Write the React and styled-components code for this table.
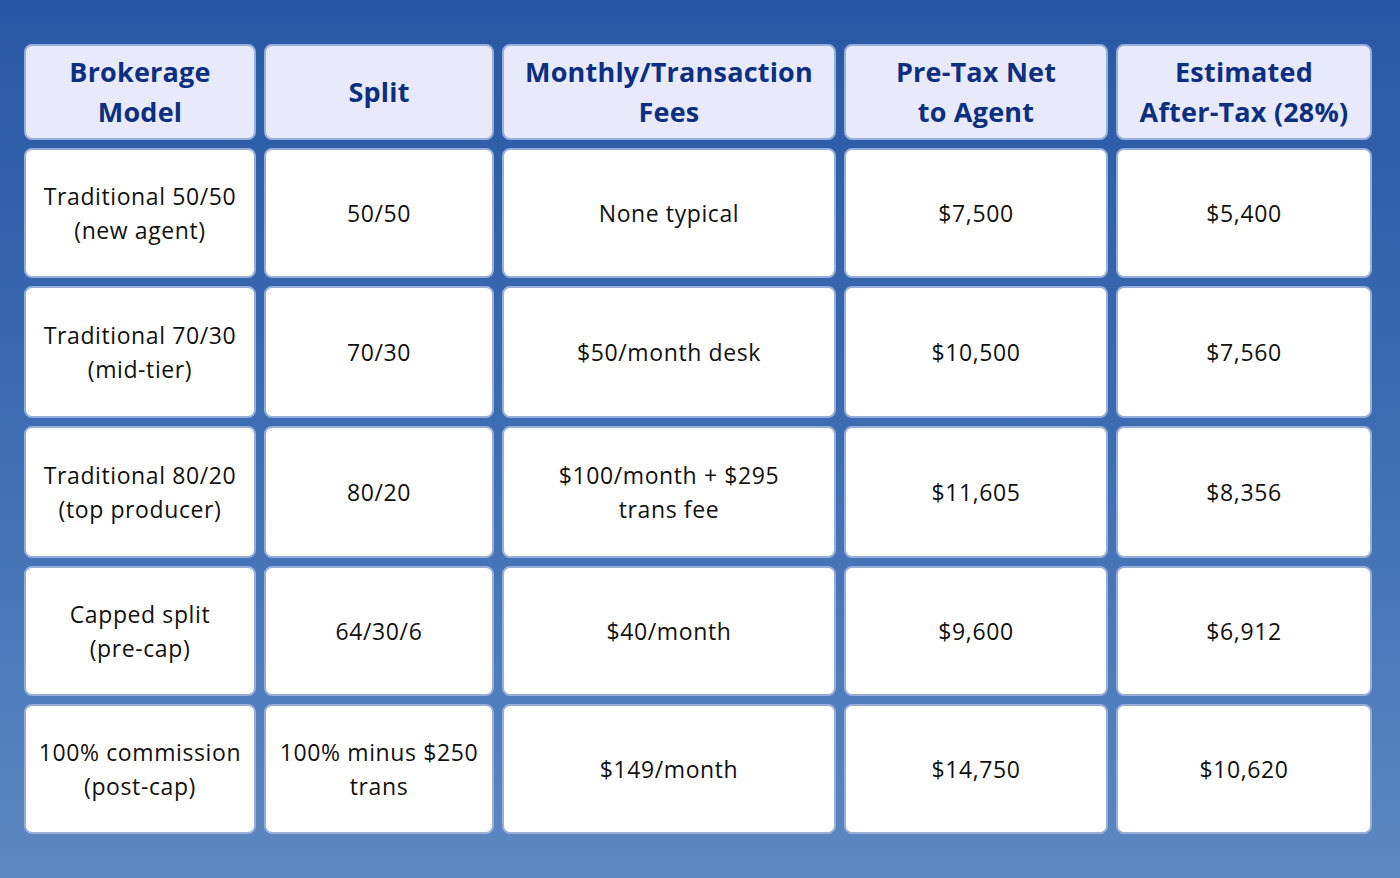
import React from "react";
import styled, { createGlobalStyle } from "styled-components";

const Global = createGlobalStyle`
  html, body { margin: 0; padding: 0; }
  body { font-family: "Open Sans", "Noto Sans", sans-serif; }
`;

const Page = styled.div`
  width: 1400px;
  height: 878px;
  box-sizing: border-box;
  padding: 44px 28px 0 24px;
  background: linear-gradient(180deg, #2957a5 0%, #3d6db3 50%, #5d88c1 100%);
`;

const Grid = styled.div`
  display: grid;
  grid-template-columns: 232px 230px 334px 264px 256px;
  grid-template-rows: 96px 130px 132px 132px 130px 130px;
  gap: 8px;
`;

const Cell = styled.div`
  box-sizing: border-box;
  border: 2px solid #98afd9;
  border-radius: 8px;
  display: flex;
  align-items: center;
  justify-content: center;
  text-align: center;
  padding: 0 2px;
  white-space: nowrap;
  background: ${(p) => (p.$head ? "#e8eafc" : "#ffffff")};
  color: ${(p) => (p.$head ? "#0c2f82" : "#111111")};
  font-weight: ${(p) => (p.$head ? 700 : 400)};
  font-size: ${(p) => (p.$head ? "27px" : "23px")};
  line-height: ${(p) => (p.$head ? "40px" : "34px")};
  letter-spacing: ${(p) => (p.$head ? "0.2px" : "0.6px")};
`;

const head = [
  ["Brokerage", "Model"],
  ["Split"],
  ["Monthly/Transaction", "Fees"],
  ["Pre-Tax Net", "to Agent"],
  ["Estimated", "After-Tax (28%)"],
];

const rows = [
  [["Traditional 50/50", "(new agent)"], ["50/50"], ["None typical"], ["$7,500"], ["$5,400"]],
  [["Traditional 70/30", "(mid-tier)"], ["70/30"], ["$50/month desk"], ["$10,500"], ["$7,560"]],
  [["Traditional 80/20", "(top producer)"], ["80/20"], ["$100/month + $295", "trans fee"], ["$11,605"], ["$8,356"]],
  [["Capped split", "(pre-cap)"], ["64/30/6"], ["$40/month"], ["$9,600"], ["$6,912"]],
  [["100% commission", "(post-cap)"], ["100% minus $250", "trans"], ["$149/month"], ["$14,750"], ["$10,620"]],
];

const Lines = ({ lines }) => (
  <span>
    {lines.map((l, i) => (
      <React.Fragment key={i}>
        {i > 0 && <br />}
        {l}
      </React.Fragment>
    ))}
  </span>
);

export default function App() {
  return (
    <>
      <Global />
      <Page>
        <Grid>
          {head.map((h, i) => (
            <Cell key={"h" + i} $head>
              <Lines lines={h} />
            </Cell>
          ))}
          {rows.map((r, ri) =>
            r.map((c, ci) => (
              <Cell key={ri + "-" + ci}>
                <Lines lines={c} />
              </Cell>
            ))
          )}
        </Grid>
      </Page>
    </>
  );
}
